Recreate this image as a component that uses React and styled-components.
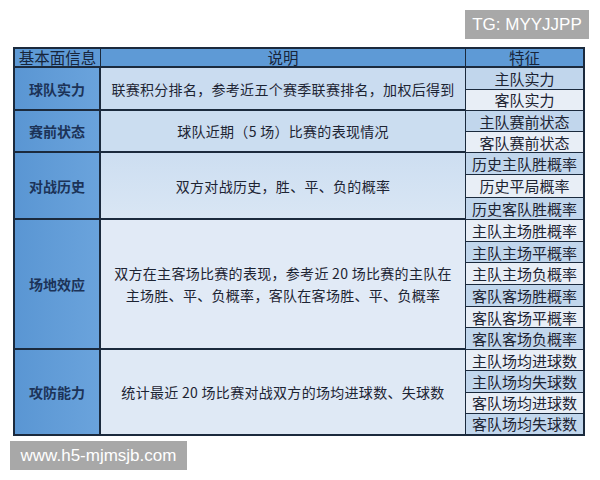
import React from "react";
import styled, { createGlobalStyle } from "styled-components";

const Global = createGlobalStyle`
  html, body { margin: 0; padding: 0; background: #ffffff; }
  body { font-family: "Noto Sans CJK SC", "Noto Sans", sans-serif; }
`;

const Page = styled.div`
  width: 600px;
  height: 480px;
  display: flex;
  flex-direction: column;
  padding-top: 10px;
  box-sizing: border-box;
`;

const TopBar = styled.div`
  display: flex;
  justify-content: flex-end;
  padding-right: 11px;
`;

const Badge = styled.div`
  background: #a8a8a8;
  color: #ffffff;
  font-family: "Liberation Sans", Arial, sans-serif;
  font-size: 17px;
  height: 29px;
  width: ${(p) => p.$w}px;
  display: flex;
  align-items: center;
  justify-content: center;
  box-sizing: border-box;
`;

const BottomBar = styled.div`
  display: flex;
  padding-left: 10px;
  margin-top: 5px;
`;

const Table = styled.div`
  margin: 8px 0 0 13px;
  width: 572px;
  box-sizing: border-box;
  border: 2px solid #1b2a3d;
  display: grid;
  grid-template-columns: 86px 365px 1fr;
  grid-template-rows: 19px 43px 42px 67px 130px 84px;
  color: #17253b;
`;

const HeadCell = styled.div`
  background: #5e9ad6;
  border-right: ${(p) => (p.$last ? "none" : "1px solid #1b2a3d")};
  border-bottom: 2px solid #1b2a3d;
  display: flex;
  align-items: center;
  justify-content: center;
  font-size: 15.5px;
  line-height: 1;
`;

const LabelCell = styled.div`
  background: linear-gradient(90deg, #5a96d3, #6aa3dc);
  border-right: 2px solid #1b2a3d;
  border-bottom: ${(p) => (p.$last ? "none" : "2px solid #1b2a3d")};
  display: flex;
  align-items: center;
  justify-content: center;
  font-weight: 700;
  font-size: 14px;
  color: #1c3358;
`;

const DescCell = styled.div`
  background: ${(p) => p.$bg};
  border-right: 1px solid #1b2a3d;
  border-bottom: ${(p) => (p.$last ? "none" : "2px solid #1b2a3d")};
  display: flex;
  align-items: center;
  justify-content: center;
  text-align: center;
  font-size: 14px;
  letter-spacing: 0.3px;
  line-height: 22px;
  padding: 0 6px;
  color: #1d2433;
`;

const FeatureCol = styled.div`
  display: flex;
  flex-direction: column;
  border-bottom: ${(p) => (p.$last ? "none" : "1px solid #1b2a3d")};
`;

const Feature = styled.div`
  flex: 1;
  background: ${(p) => (p.$blue ? "#c1d6ec" : "#e8eef6")};
  border-bottom: ${(p) => (p.$last ? "none" : "1px solid #1b2a3d")};
  display: flex;
  align-items: center;
  justify-content: center;
  font-size: 15px;
  line-height: 1;
  color: #1d2433;
`;

const rows = [
  {
    label: "球队实力",
    desc: ["联赛积分排名，参考近五个赛季联赛排名，加权后得到"],
    bg: "#cadcf0",
    features: ["主队实力", "客队实力"],
    start: true,
  },
  {
    label: "赛前状态",
    desc: ["球队近期（5 场）比赛的表现情况"],
    bg: "#cbddf0",
    features: ["主队赛前状态", "客队赛前状态"],
    start: true,
  },
  {
    label: "对战历史",
    desc: ["双方对战历史，胜、平、负的概率"],
    bg: "linear-gradient(180deg, #cddef1, #d9e6f4)",
    features: ["历史主队胜概率", "历史平局概率", "历史客队胜概率"],
    start: true,
  },
  {
    label: "场地效应",
    desc: ["双方在主客场比赛的表现，参考近 20 场比赛的主队在", "主场胜、平、负概率，客队在客场胜、平、负概率"],
    bg: "#e1eaf6",
    features: ["主队主场胜概率", "主队主场平概率", "主队主场负概率", "客队客场胜概率", "客队客场平概率", "客队客场负概率"],
    start: false,
  },
  {
    label: "攻防能力",
    desc: ["统计最近 20 场比赛对战双方的场均进球数、失球数"],
    bg: "#dfe9f5",
    features: ["主队场均进球数", "主队场均失球数", "客队场均进球数", "客队场均失球数"],
    start: false,
  },
];

export default function App() {
  return (
    <Page>
      <Global />
      <TopBar>
        <Badge $w={124}>TG: MYYJJPP</Badge>
      </TopBar>
      <Table>
        <HeadCell>基本面信息</HeadCell>
        <HeadCell>说明</HeadCell>
        <HeadCell $last>特征</HeadCell>
        {rows.map((r, i) => {
          const last = i === rows.length - 1;
          return (
            <React.Fragment key={r.label}>
              <LabelCell $last={last}>{r.label}</LabelCell>
              <DescCell $bg={r.bg} $last={last}>
                <div>
                  {r.desc.map((d) => (
                    <div key={d}>{d}</div>
                  ))}
                </div>
              </DescCell>
              <FeatureCol $last={last}>
                {r.features.map((f, j) => (
                  <Feature
                    key={f}
                    $blue={r.start ? j % 2 === 0 : j % 2 === 1}
                    $last={j === r.features.length - 1}
                  >
                    {f}
                  </Feature>
                ))}
              </FeatureCol>
            </React.Fragment>
          );
        })}
      </Table>
      <BottomBar>
        <Badge $w={177}>www.h5-mjmsjb.com</Badge>
      </BottomBar>
    </Page>
  );
}
